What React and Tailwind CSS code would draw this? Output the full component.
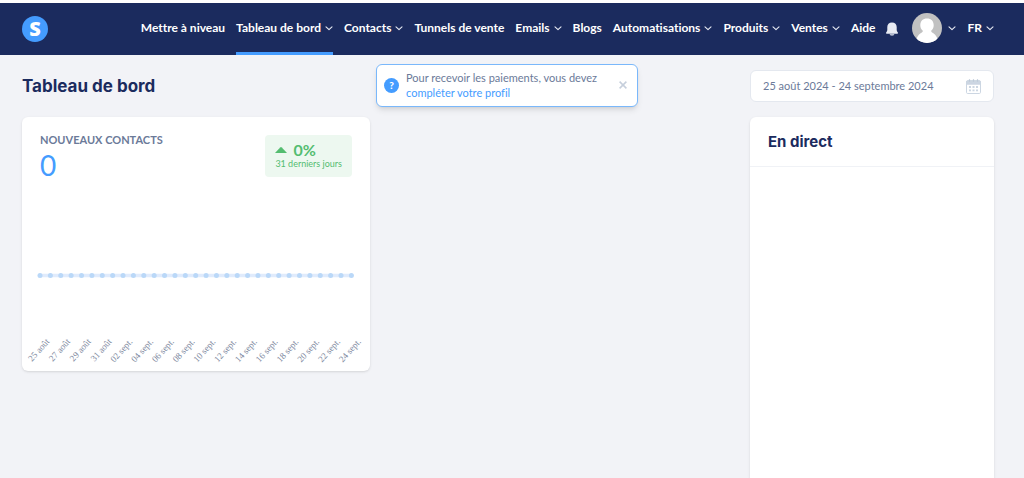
import React from "react";

const NAV = [
  { label: "Mettre à niveau" },
  { label: "Tableau de bord", menu: true, active: true },
  { label: "Contacts", menu: true },
  { label: "Tunnels de vente" },
  { label: "Emails", menu: true },
  { label: "Blogs" },
  { label: "Automatisations", menu: true },
  { label: "Produits", menu: true },
  { label: "Ventes", menu: true },
  { label: "Aide" },
];

const DATES = [
  "25 août", "27 août", "29 août", "31 août", "02 sept.", "04 sept.",
  "06 sept.", "08 sept.", "10 sept.", "12 sept.", "14 sept.", "16 sept.",
  "18 sept.", "20 sept.", "22 sept.", "24 sept.",
];

const STEP = 10.38;

function Chevron() {
  return (
    <svg className="h-2 w-2 shrink-0" viewBox="0 0 8 8" fill="none" stroke="#e8ebf3" strokeWidth="1.1" strokeLinecap="round" strokeLinejoin="round" aria-hidden="true">
      <path d="M1 2.800 4 5.600 7 2.800" />
    </svg>
  );
}

function NavItem({ item }) {
  const state = item.active ? "border-[#449cff]" : "border-transparent";
  const cls = `flex items-center gap-1 border-b-[3px] pt-px whitespace-nowrap ${state}`;
  if (item.menu) {
    return (
      <button type="button" className={cls} aria-haspopup="menu">
        {item.label}
        <Chevron />
      </button>
    );
  }
  return <a href="#" className={cls}>{item.label}</a>;
}

function Bell() {
  return (
    <svg className="h-[14px] w-[12px]" viewBox="0 0 12 14" fill="#e8ebf3" aria-hidden="true">
      <path d="M6 .4C3 .4 1.300 2.500 1.300 5v3c0 .9-.3 1.400-.8 2-.3.300-.5.600-.5 1 0 .400.300.700.700.700h10.600c.4 0 .7-.3.7-.7 0-.4-.2-.7-.5-1-.5-.6-.8-1.100-.8-2V5C10.700 2.500 9 .4 6 .4Z" />
      <path d="M3.600 12.200h4.800c-.2.900-1 1.400-2.400 1.400s-2.200-.5-2.400-1.400Z" />
    </svg>
  );
}

function Avatar() {
  return (
    <svg className="h-[30px] w-[30px]" viewBox="0 0 30 30" aria-hidden="true">
      <defs>
        <clipPath id="avatar-disc"><circle cx="15" cy="15" r="15" /></clipPath>
      </defs>
      <g clipPath="url(#avatar-disc)">
        <rect width="30" height="30" fill="#c1c1c1" />
        <path fill="#fff" d="M15 5.600c-4.200 0-6.700 2.700-6.700 6.700 0 2.400 1 4.400 2.700 5.700-.3.900-1.200 1.400-2.400 2.200C6 22 4.200 25 3.500 30h23c-.7-5-2.500-8-5.100-9.800-1.200-.8-2.100-1.300-2.400-2.200 1.700-1.300 2.700-3.300 2.700-5.700 0-4-2.500-6.700-6.700-6.700Z" />
      </g>
    </svg>
  );
}

function CalendarIcon() {
  return (
    <svg className="h-[15px] w-[15px]" viewBox="0 0 15 15" aria-hidden="true">
      <rect x="0.500" y="1.800" width="14" height="12.700" rx="1.200" fill="#fff" stroke="#ccd6e2" />
      <path d="M.5 5.200V3a1.200 1.200 0 0 1 1.200-1.200h11.600A1.200 1.200 0 0 1 14.500 3v2.200Z" fill="#ccd6e2" stroke="#ccd6e2" />
      <path d="M3.500.3v2.500M7.500.3v2.500M11.500.3v2.500" stroke="#bdc9d8" strokeWidth="1.200" />
      <path d="M3 8h2M6.500 8h2M10 8h2M3 11.300h2M6.500 11.300h2M10 11.300h2" stroke="#ccd6e2" strokeWidth="1.800" />
    </svg>
  );
}

function ContactsChart() {
  return (
    <svg className="block h-auto w-full" viewBox="0 3 348 190" role="img" aria-label="Nouveaux contacts par jour">
      <line x1="18" y1="97.500" x2={18 + STEP * 30} y2="97.500" stroke="#e0ebfc" strokeWidth="3.500" strokeLinecap="round" />
      {Array.from({ length: 31 }, (_, i) => (
        <circle key={i} cx={18 + STEP * i} cy="97.500" r="2.500" fill="#bad8f8" />
      ))}
      {DATES.map((d, i) => (
        <text
          key={d}
          transform={`translate(${28 + STEP * 2 * i} 164) rotate(-48)`}
          textAnchor="end"
          className="fill-[#7d889e] font-['Liberation_Serif',serif] text-[9px]"
        >
          {d}
        </text>
      ))}
    </svg>
  );
}

export default function App() {
  return (
    <div className="flex min-h-screen flex-col bg-[#f2f3f7] font-['Lato',sans-serif] text-[#6b7a99] [font-variant-ligatures:none]">
      <header className="border-t-[3px] border-white bg-[#1b2b5e] text-white">
        <div className="mr-[10px] flex h-[52px] justify-between pr-5 pl-[22px]">
          <a href="#" aria-label="Accueil" className="flex items-center">
            <span className="flex h-[26px] w-[26px] items-center justify-center rounded-full bg-[#449cff] font-['Open_Sans',sans-serif] text-[20px] leading-none font-extrabold">
              S
            </span>
          </a>
          <nav className="flex gap-[11px] text-[12px] font-bold">
            {NAV.map((item) => <NavItem key={item.label} item={item} />)}
            <button type="button" aria-label="Notifications" className="flex items-center"><Bell /></button>
            <button type="button" aria-label="Mon compte" className="ml-[3px] flex items-center gap-[6px] pb-[2px]">
              <Avatar />
              <Chevron />
            </button>
            <NavItem item={{ label: "FR", menu: true }} />
          </nav>
        </div>
      </header>

      <main className="relative mr-[10px] flex grow flex-col pr-[20px] pl-[22px]">
        <div className="flex items-center justify-between pt-[15px] pb-[15px]">
          <h1 className="font-['Inter',sans-serif] text-[17px] leading-6 font-bold text-[#1b2b5e]">Tableau de bord</h1>
          <button type="button" className="flex h-8 w-[244px] items-center justify-between rounded-md border border-[#e4e8ef] bg-white px-3 text-[11px]">
            25 août 2024 - 24 septembre 2024
            <CalendarIcon />
          </button>
        </div>

        <div role="status" className="absolute top-[9px] left-1/2 flex w-[262px] -translate-x-1/2 items-center rounded-md border border-[#7ab8fb] bg-white pt-[5px] pb-[6px] pr-[10px] pl-[7px] shadow-md">
          <span className="flex h-[15px] w-[15px] shrink-0 items-center justify-center rounded-full bg-[#449cff] text-[10px] font-black text-white">?</span>
          <p className="ml-[7px] grow text-[11px] leading-[15px]">
            Pour recevoir les paiements, vous devez
            <br />
            <a href="#" className="text-[#449cff]">compléter votre profil</a>
          </p>
          <button type="button" aria-label="Fermer">
            <svg className="h-2 w-2" viewBox="0 0 8 8" stroke="#c6cfdc" strokeWidth="1.500" aria-hidden="true">
              <path d="M.6.6 7.400 7.400M7.400.6.6 7.400" />
            </svg>
          </button>
        </div>

        <div className="grid grow grid-cols-[1fr_1fr_244px] gap-4">
          <section className="self-start rounded-md bg-white shadow-sm">
            <div className="flex items-start justify-between px-[18px] pt-[18px]">
              <div>
                <h2 className="text-[11px] leading-[10px] font-bold uppercase">Nouveaux contacts</h2>
                <p className="mt-1 text-[28px] leading-8 text-[#449cff]">0</p>
              </div>
              <div className="rounded bg-[#edf8f0] px-[10px] py-[7px] text-[#54bd70]">
                <p className="flex items-center gap-[6px] text-[16px] leading-4 font-bold">
                  <svg className="h-[6px] w-3" viewBox="0 0 12 6" fill="#54bd70" aria-hidden="true"><path d="M0 6 5.200.4q.8-.8 1.600 0L12 6Z" /></svg>
                  0%
                </p>
                <p className="text-[9px] leading-3">31 derniers jours</p>
              </div>
            </div>
            <ContactsChart />
          </section>

          <section className="col-start-3 rounded-t-md bg-white shadow-sm">
            <h2 className="border-b border-[#f0f2f6] px-[18px] pt-[13px] pb-3 font-['Inter',sans-serif] text-[15px] leading-6 font-bold text-[#1b2b5e]">
              En direct
            </h2>
          </section>
        </div>
      </main>
    </div>
  );
}
